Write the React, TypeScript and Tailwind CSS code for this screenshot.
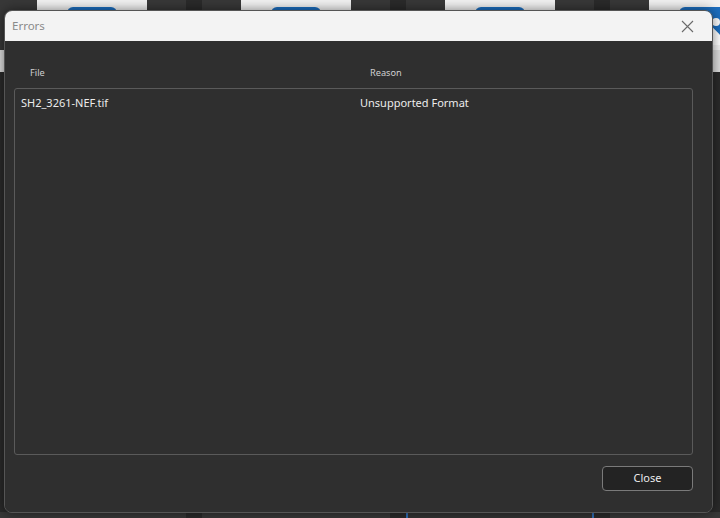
import React from 'react';

const font = { fontFamily: '"Noto Sans", "Open Sans", "Liberation Sans", sans-serif' };

const TopThumb = () => (
  <div className="w-[188px] h-[132px] shrink-0 flex flex-col items-center bg-[#383838]">
    <div className="w-[110px] h-[110px] bg-[#f2f2f2] flex flex-col items-center justify-end pb-[5px]">
      <div className="w-[50px] h-[38px] rounded-[6px] bg-[#1c6fc0] relative overflow-hidden">
        <div className="absolute right-[9px] top-[11px] w-[8px] h-[8px] rounded-full bg-white" />
        <div className="absolute left-[14px] bottom-[-14px] w-[30px] h-[30px] rotate-45 bg-white" />
      </div>
    </div>
    <div className="w-full h-[22px] bg-[#dedede] flex items-center justify-center text-[9px] text-[#9a9a9a]">
      ×
    </div>
  </div>
);

const BottomThumb = ({ selected = false }: { selected?: boolean }) => (
  <div
    className={`w-[188px] h-[20px] shrink-0 flex justify-center ${
      selected ? 'bg-[#333] border-x-2 border-[#2f6db5]' : 'bg-[#383838]'
    }`}
  >
    <div className="mt-[8px] w-[110px] h-[12px] bg-[#f2f2f2]" />
  </div>
);

const Gallery = () => (
  <div className="absolute inset-0 bg-[#2a2a2a] overflow-hidden flex flex-col justify-between">
    <div className="flex gap-4 ml-[-2px] mt-[-60px]">
      <TopThumb />
      <TopThumb />
      <TopThumb />
      <TopThumb />
    </div>
    <div className="flex gap-4 ml-[-2px] mb-[-14px]">
      <BottomThumb />
      <BottomThumb />
      <BottomThumb selected />
      <BottomThumb />
    </div>
  </div>
);

export default function App() {
  return (
    <div className="relative w-[720px] h-[518px] overflow-hidden" style={font}>
      <Gallery />
      <div className="absolute left-[4px] top-[10px] w-[709px] h-[503px] rounded-[8px] overflow-hidden border border-[#555] flex flex-col shadow-[0_0_12px_rgba(0,0,0,0.5)]">
        <div className="h-[30px] shrink-0 bg-[#f3f3f3] flex items-center justify-between pl-[7px] pr-[16px]">
          <span className="text-[11.5px] text-[#8a8a8a]">Errors</span>
          <svg width="13" height="13" viewBox="0 0 13 13" className="mr-[2px]">
            <path d="M1 1L12 12M12 1L1 12" stroke="#6a6a6a" strokeWidth="1.1" />
          </svg>
        </div>
        <div className="flex-1 bg-[#2f2f2f] pl-[9px] pr-[19px] pt-[26px] flex flex-col">
          <div className="flex h-[12px] items-center text-[9.2px] text-[#cfcfcf]">
            <span className="w-[356px] pl-[16px]">File</span>
            <span>Reason</span>
          </div>
          <div className="mt-[9px] h-[367px] rounded-[3px] border border-[#5a5a5a] bg-[#2f2f2f]">
            <div className="flex items-center h-[28px] text-[11px] text-[#ececec]">
              <span className="w-[345px] pl-[6px]">SH2_3261-NEF.tif</span>
              <span>Unsupported Format</span>
            </div>
          </div>
          <div className="mt-[11px] flex justify-end">
            <button className="w-[91px] h-[25px] rounded-[4px] border border-[#7a7a7a] bg-[#232323] text-[11px] text-[#ececec]">
              Close
            </button>
          </div>
        </div>
      </div>
    </div>
  );
}
